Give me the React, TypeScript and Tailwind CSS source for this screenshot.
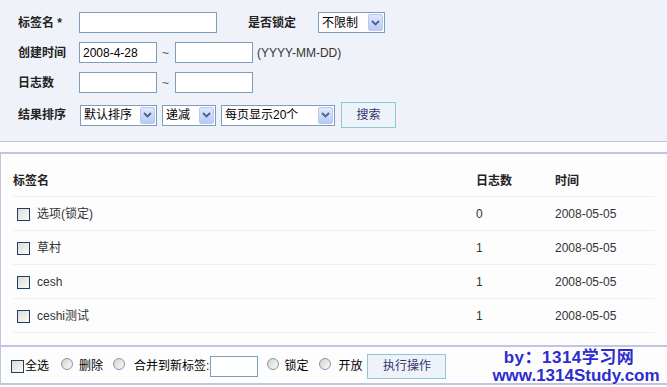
import React from 'react';

// XP 风格的下拉框
function XpSelect({ value, width }: { value: string; width: string }) {
  return (
    <div className={`flex h-[21px] items-center justify-between border border-[#7f9db9] bg-white pl-[3px] pr-[1px] ${width}`}>
      <span className="text-[12px] text-black">{value}</span>
      <span className="flex h-[17px] w-[15px] items-center justify-center rounded-[2px] border border-[#b8c9ef] bg-gradient-to-b from-[#dfe8fd] to-[#b6cbf7]">
        <svg width="9" height="6" viewBox="0 0 9 6">
          <path d="M1 1 L4.5 4.5 L8 1" fill="none" stroke="#4d6185" strokeWidth="1.8" />
        </svg>
      </span>
    </div>
  );
}

function XpInput({ width, value }: { width: string; value?: string }) {
  return (
    <div className={`flex h-[21px] items-center border border-[#7f9db9] bg-white px-[3px] text-[12px] text-black ${width}`}>
      {value}
    </div>
  );
}

function Checkbox() {
  return <span className="inline-block h-[13px] w-[13px] border border-[#1c3f66] bg-gradient-to-br from-[#dcdcd6] to-[#fbfbfa]" />;
}

function Radio() {
  return <span className="inline-block h-[12px] w-[12px] rounded-full border border-[#8a94a8] bg-gradient-to-br from-[#d4d4ce] to-[#fbfbfa]" />;
}

const tags = [
  { name: '选项(锁定)', count: 0, date: '2008-05-05' },
  { name: '草村', count: 1, date: '2008-05-05' },
  { name: 'cesh', count: 1, date: '2008-05-05' },
  { name: 'ceshi测试', count: 1, date: '2008-05-05' },
];

export default function App() {
  return (
    <div
      className="relative h-[387px] w-[667px] overflow-hidden bg-[#fdfdfd] text-[12px] text-[#333]"
      style={{ fontFamily: '"Liberation Sans", "Noto Sans CJK SC", sans-serif' }}
    >
      {/* 搜索条件 */}
      <div className="flex h-[142px] flex-col border-b border-[#c5c7d0] bg-[#eff3f9] pl-[18px] pt-[12px]">
        <div className="flex h-[21px] items-center">
          <span className="w-[61px] font-bold text-[#222]">标签名 *</span>
          <XpInput width="w-[138px]" />
          <span className="ml-[31px] w-[70px] font-bold text-[#222]">是否锁定</span>
          <XpSelect value="不限制" width="w-[67px]" />
        </div>
        <div className="mt-[9px] flex h-[21px] items-center">
          <span className="w-[61px] font-bold text-[#222]">创建时间</span>
          <XpInput width="w-[78px]" value="2008-4-28" />
          <span className="w-[18px] pl-[5px] text-[#555]">~</span>
          <XpInput width="w-[78px]" />
          <span className="ml-[4px] text-[#333]">(YYYY-MM-DD)</span>
        </div>
        <div className="mt-[9px] flex h-[21px] items-center">
          <span className="w-[61px] font-bold text-[#222]">日志数</span>
          <XpInput width="w-[78px]" />
          <span className="w-[18px] pl-[5px] text-[#555]">~</span>
          <XpInput width="w-[78px]" />
        </div>
        <div className="mt-[9px] flex h-[26px] items-center">
          <span className="w-[62px] font-bold text-[#222]">结果排序</span>
          <XpSelect value="默认排序" width="w-[77px]" />
          <div className="ml-[5px]">
            <XpSelect value="递减" width="w-[54px]" />
          </div>
          <div className="ml-[5px]">
            <XpSelect value="每页显示20个" width="w-[114px]" />
          </div>
          <button className="ml-[6px] h-[26px] w-[55px] border border-[#8cc8d8] bg-[#eef3fa] text-[12px] text-[#33336a]">
            搜索
          </button>
        </div>
      </div>

      <div className="h-[10px]" />

      {/* 标签列表 */}
      <div className="border-l border-t-2 border-[#c3c4e2] pl-[12px] pr-[12px]">
        <div className="flex h-[43px] items-end border-b border-[#eceff3] pb-[6px] font-bold text-[#222]">
          <span className="w-[463px]">标签名</span>
          <span className="w-[79px]">日志数</span>
          <span>时间</span>
        </div>
        {tags.map((t) => (
          <div key={t.name} className="flex h-[34px] items-center border-b border-[#eceff3] pt-[1px] text-[#333]">
            <span className="flex w-[463px] items-center gap-[7px] pl-[4px]">
              <Checkbox />
              <span>{t.name}</span>
            </span>
            <span className="w-[79px]">{t.count}</span>
            <span>{t.date}</span>
          </div>
        ))}
        <div className="h-[12px]" />
      </div>

      {/* 批量操作 */}
      <div className="flex h-[40px] items-center border-b-2 border-l border-t-2 border-[#c3c4e2] pl-[10px] pt-[2px] text-black">
        <Checkbox />
        <span className="ml-[1px]">全选</span>
        <span className="ml-[12px]"><Radio /></span>
        <span className="ml-[6px]">删除</span>
        <span className="ml-[10px]"><Radio /></span>
        <span className="ml-[9px]">合并到新标签:</span>
        <span className="ml-[1px]"><XpInput width="w-[48px]" /></span>
        <span className="ml-[9px]"><Radio /></span>
        <span className="ml-[5px]">锁定</span>
        <span className="ml-[11px]"><Radio /></span>
        <span className="ml-[7px]">开放</span>
        <button className="ml-[5px] h-[25px] w-[79px] border border-[#8cc8d8] bg-[#eef3fa] text-[12px] text-[#33336a]">
          执行操作
        </button>
      </div>

      {/* 水印 */}
      <div
        className="absolute left-[487px] top-[349px] flex w-[178px] flex-col items-center text-[17px] font-bold leading-[18px] text-[#2d2dcc]"
        style={{ fontFamily: '"Liberation Sans", "Noto Sans CJK SC", sans-serif', textShadow: '0 0 2px #fff, 0 0 1px #fff' }}
      >
        <span className="pr-[14px] tracking-[0.5px]">by：1314学习网</span>
        <span>www.1314Study.com</span>
      </div>
    </div>
  );
}
